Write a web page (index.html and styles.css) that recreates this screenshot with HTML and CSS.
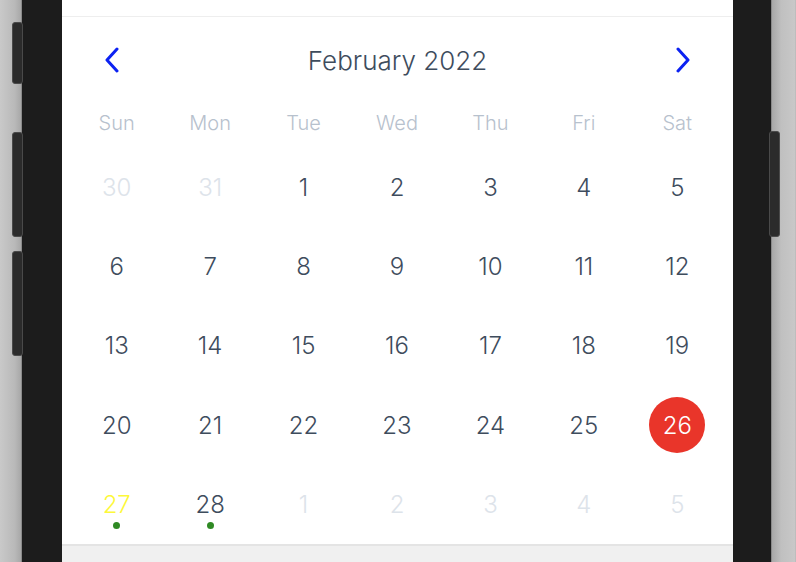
FILE: index.html
```html
<!DOCTYPE html>
<html lang="en">
<head>
<meta charset="utf-8">
<title>Calendar</title>
<link rel="stylesheet" href="styles.css">
</head>
<body>
<div class="device">
  <div class="side side-left">
    <span class="btn btn-l1"></span>
    <span class="btn btn-l2"></span>
    <span class="btn btn-l3"></span>
  </div>
  <div class="bezel"></div>
  <div class="screen">
    <div class="top-strip"></div>
    <div class="cal">
      <div class="cal-header">
        <button class="nav" aria-label="Previous month">
          <svg width="16" height="26" viewBox="0 0 16 26"><path d="M13 2 L3 13 L13 24" fill="none" stroke="#0c22f2" stroke-width="3" stroke-linecap="round" stroke-linejoin="round"/></svg>
        </button>
        <div class="title">February 2022</div>
        <button class="nav" aria-label="Next month">
          <svg width="16" height="26" viewBox="0 0 16 26"><path d="M3 2 L13 13 L3 24" fill="none" stroke="#0c22f2" stroke-width="3" stroke-linecap="round" stroke-linejoin="round"/></svg>
        </button>
      </div>
      <div class="weekdays">
        <span>Sun</span><span>Mon</span><span>Tue</span><span>Wed</span><span>Thu</span><span>Fri</span><span>Sat</span>
      </div>
      <div class="days">
        <div class="day muted">30</div>
        <div class="day muted">31</div>
        <div class="day">1</div>
        <div class="day">2</div>
        <div class="day">3</div>
        <div class="day">4</div>
        <div class="day">5</div>
        <div class="day">6</div>
        <div class="day">7</div>
        <div class="day">8</div>
        <div class="day">9</div>
        <div class="day">10</div>
        <div class="day">11</div>
        <div class="day">12</div>
        <div class="day">13</div>
        <div class="day">14</div>
        <div class="day">15</div>
        <div class="day">16</div>
        <div class="day">17</div>
        <div class="day">18</div>
        <div class="day">19</div>
        <div class="day">20</div>
        <div class="day">21</div>
        <div class="day">22</div>
        <div class="day">23</div>
        <div class="day">24</div>
        <div class="day">25</div>
        <div class="day"><span class="selected">26</span></div>
        <div class="day today">27<span class="dot"></span></div>
        <div class="day">28<span class="dot"></span></div>
        <div class="day muted">1</div>
        <div class="day muted">2</div>
        <div class="day muted">3</div>
        <div class="day muted">4</div>
        <div class="day muted">5</div>
      </div>
    </div>
    <div class="footer"></div>
  </div>
  <div class="bezel bezel-r"></div>
  <div class="side side-right">
    <span class="btn btn-r1"></span>
  </div>
</div>
</body>
</html>
```
FILE: styles.css
```css
* { box-sizing: border-box; }
html, body { margin: 0; padding: 0; }
body {
  width: 796px;
  height: 562px;
  overflow: hidden;
  font-family: Inter, "Noto Sans", sans-serif;
  font-weight: 300;
  background: #bdbdbd;
}
.device {
  display: flex;
  height: 562px;
}
.side {
  position: relative;
  height: 100%;
}
.side-left {
  width: 22px;
  background: linear-gradient(to right, #c9c9c9, #b9b9b9 70%, #a8a8a8);
  border-right: 1px solid #8a8a8a;
}
.side-right {
  width: 24px;
  background: linear-gradient(to right, #a8a8a8, #c0c0c0 40%, #c8c8c8);
  border-left: 1px solid #8a8a8a;
}
.bezel {
  width: 40px;
  background: #1c1c1c;
}
.bezel-r { width: 38px; }
.btn {
  position: absolute;
  width: 11px;
  background: #2b2b2b;
  border: 1px solid #4a4a4a;
  border-radius: 3px;
}
.btn-l1 { left: 12px; top: 22px; height: 62px; }
.btn-l2 { left: 12px; top: 132px; height: 105px; }
.btn-l3 { left: 12px; top: 251px; height: 105px; }
.btn-r1 { left: -3px; top: 131px; height: 106px; }

.screen {
  width: 671px;
  display: flex;
  flex-direction: column;
  background: #fff;
}
.top-strip {
  height: 17px;
  border-bottom: 1px solid #eeeeee;
}
.cal {
  padding: 15px 9px 0 8px;
}
.cal-header {
  height: 56px;
  display: flex;
  align-items: center;
  justify-content: space-between;
  padding: 0 33px 0 34px;
}
.nav {
  border: 0;
  background: none;
  padding: 0;
  width: 16px;
  height: 26px;
  display: flex;
}
.title {
  font-size: 26px;
  color: #3e4c5d;
  letter-spacing: 0;
}
.weekdays {
  margin-top: 15px;
  height: 40px;
  display: grid;
  grid-template-columns: repeat(7, 1fr);
  align-items: center;
  text-align: center;
  font-size: 20px;
  color: #b7c1cd;
}
.days {
  margin-top: 4.5px;
  display: grid;
  grid-template-columns: repeat(7, 1fr);
  grid-auto-rows: 79.3px;
}
.day {
  position: relative;
  display: flex;
  align-items: center;
  justify-content: center;
  font-size: 24px;
  color: #3e4c5d;
}
.day.muted { color: #dde3ea; }
.day.today { color: #fdf83a; }
.selected {
  width: 56px;
  height: 56px;
  border-radius: 50%;
  background: #e9352a;
  color: #fff;
  display: flex;
  align-items: center;
  justify-content: center;
}
.dot {
  position: absolute;
  left: 50%;
  top: 57px;
  width: 7px;
  height: 7px;
  margin-left: -3.5px;
  border-radius: 50%;
  background: #2f8a24;
}
.footer {
  flex: 1;
  background: #f0f0f0;
  border-top: 2px solid #e4e4e4;
}
```
